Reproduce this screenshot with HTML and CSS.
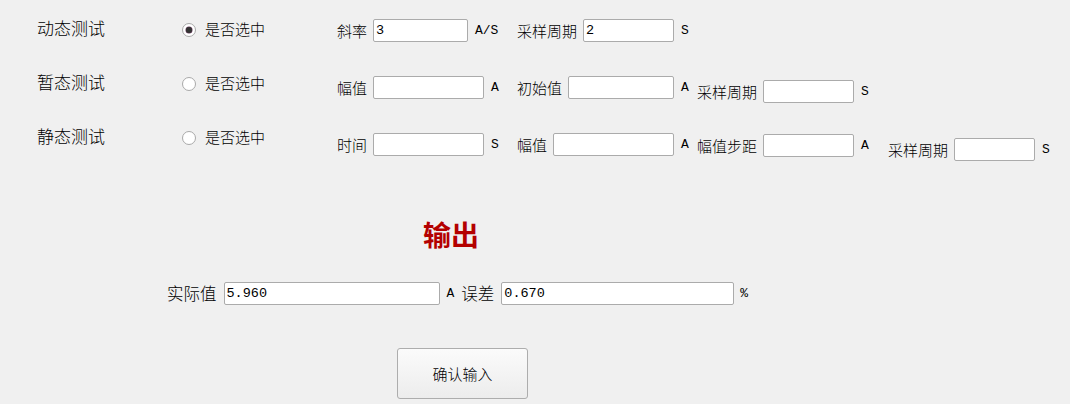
FILE: index.html
```html
<!DOCTYPE html>
<html lang="zh-CN">
<head>
<meta charset="utf-8">
<title>测试</title>
<link rel="stylesheet" href="styles.css">
</head>
<body>
<div class="window">
  <div class="top">
    <div class="modes">
      <div class="mode">
        <span class="mode-name">动态测试</span>
        <span class="radio checked"></span>
        <span class="radio-text">是否选中</span>
      </div>
      <div class="mode">
        <span class="mode-name">暂态测试</span>
        <span class="radio"></span>
        <span class="radio-text">是否选中</span>
      </div>
      <div class="mode">
        <span class="mode-name">静态测试</span>
        <span class="radio"></span>
        <span class="radio-text">是否选中</span>
      </div>
    </div>
    <div class="params">
      <div class="prow">
        <div class="field c1"><span class="flabel">斜率</span><input class="box w95" type="text" value="3"><span class="unit">A/S</span></div>
        <div class="field c2"><span class="flabel">采样周期</span><input class="box w91" type="text" value="2"><span class="unit">S</span></div>
      </div>
      <div class="prow">
        <div class="field c1"><span class="flabel">幅值</span><input class="box w111" type="text" value=""><span class="unit">A</span></div>
        <div class="field c2"><span class="flabel">初始值</span><input class="box w106" type="text" value=""><span class="unit">A</span></div>
        <div class="field c3 drop4"><span class="flabel">采样周期</span><input class="box w91" type="text" value=""><span class="unit">S</span></div>
      </div>
      <div class="prow">
        <div class="field c1"><span class="flabel">时间</span><input class="box w111" type="text" value=""><span class="unit">S</span></div>
        <div class="field c2"><span class="flabel">幅值</span><input class="box w121" type="text" value=""><span class="unit">A</span></div>
        <div class="field c3 drop1"><span class="flabel">幅值步距</span><input class="box w91" type="text" value=""><span class="unit">A</span></div>
        <div class="field c4 drop5"><span class="flabel">采样周期</span><input class="box w81" type="text" value=""><span class="unit">S</span></div>
      </div>
    </div>
  </div>

  <div class="output-title">输出</div>

  <div class="result">
    <span class="rlabel">实际值</span>
    <input class="box w216" type="text" value="5.960">
    <span class="unit">A</span>
    <span class="rlabel">误差</span>
    <input class="box w233" type="text" value="0.670">
    <span class="unit">%</span>
  </div>

  <div class="actions">
    <button class="btn" type="button">确认输入</button>
  </div>
</div>
</body>
</html>
```

FILE: styles.css
```css
html, body {
  margin: 0;
  padding: 0;
  background: #f0f0f0;
}

body {
  font-family: "Noto Sans CJK SC", "Noto Sans", sans-serif;
  font-weight: 300;
  color: #000;
  width: 1070px;
  height: 404px;
  overflow: hidden;
}

.window {
  display: flex;
  flex-direction: column;
}

.top {
  display: flex;
  height: 190px;
}

/* left column: test modes */
.modes {
  width: 300px;
  padding-left: 37px;
  padding-top: 3px;
  display: flex;
  flex-direction: column;
}

.mode {
  height: 54px;
  display: flex;
  align-items: center;
}

.mode-name {
  width: 145px;
  font-size: 17px;
  line-height: 20px;
  margin-bottom: 5px;
}

.radio {
  width: 12px;
  height: 12px;
  border: 1px solid #a9a9a9;
  border-radius: 50%;
  background: #fff;
  display: flex;
  align-items: center;
  justify-content: center;
}

.radio.checked::after {
  content: "";
  width: 6px;
  height: 6px;
  border-radius: 50%;
  background: #333;
  box-shadow: 0 0 0 0.5px #6a3a5e;
}

.radio-text {
  margin-left: 9px;
  font-size: 15px;
  line-height: 18px;
  margin-bottom: 3px;
}

/* right column: parameters */
.params {
  padding-top: 19px;
  display: flex;
  flex-direction: column;
}

.prow {
  height: 57px;
  display: flex;
  align-items: flex-start;
}

.field {
  display: flex;
  align-items: center;
  height: 23px;
}

.c1, .c2 { width: 180px; }
.c3 { width: 191px; }

.drop1 { margin-top: 1px; }
.drop4 { margin-top: 4px; }
.drop5 { margin-top: 5px; }

.flabel {
  font-size: 15px;
  line-height: 18px;
  margin-right: 6px;
  white-space: nowrap;
}

.unit {
  font-family: "Liberation Mono", "DejaVu Sans Mono", monospace;
  font-weight: 400;
  font-size: 13px;
  line-height: 16px;
  margin-left: 7px;
}

.box {
  box-sizing: border-box;
  height: 23px;
  margin: 0;
  padding: 0 2px;
  border: 1px solid #ababab;
  border-radius: 2px;
  background: #fff;
  font-family: "Liberation Mono", "DejaVu Sans Mono", monospace;
  font-size: 13.5px;
  color: #000;
  outline: none;
}

.w81 { width: 81px; }
.w91 { width: 91px; }
.w95 { width: 95px; }
.w106 { width: 106px; }
.w111 { width: 111px; }
.w121 { width: 121px; }
.w216 { width: 216px; }
.w233 { width: 233px; }

/* output */
.output-title {
  margin-top: 24px;
  padding-left: 423px;
  font-size: 28px;
  line-height: 40px;
  font-weight: 700;
  color: #b40000;
}

.result {
  margin-top: 28px;
  padding-left: 167px;
  display: flex;
  align-items: center;
  height: 23px;
}

.rlabel {
  font-size: 16.5px;
  line-height: 20px;
  margin-right: 7px;
  margin-bottom: 2px;
}

.result .unit {
  margin-left: 7px;
  margin-right: 7px;
}

.result .unit:last-child {
  margin-left: 6px;
}

.actions {
  margin-top: 43px;
  padding-left: 397px;
}

.btn {
  box-sizing: border-box;
  width: 131px;
  height: 51px;
  border: 1px solid #adadad;
  border-radius: 3px;
  background: linear-gradient(#fbfbfb, #ececec);
  font-family: "Noto Sans CJK SC", sans-serif;
  font-weight: 300;
  font-size: 15px;
  color: #000;
  padding: 0;
}
```
